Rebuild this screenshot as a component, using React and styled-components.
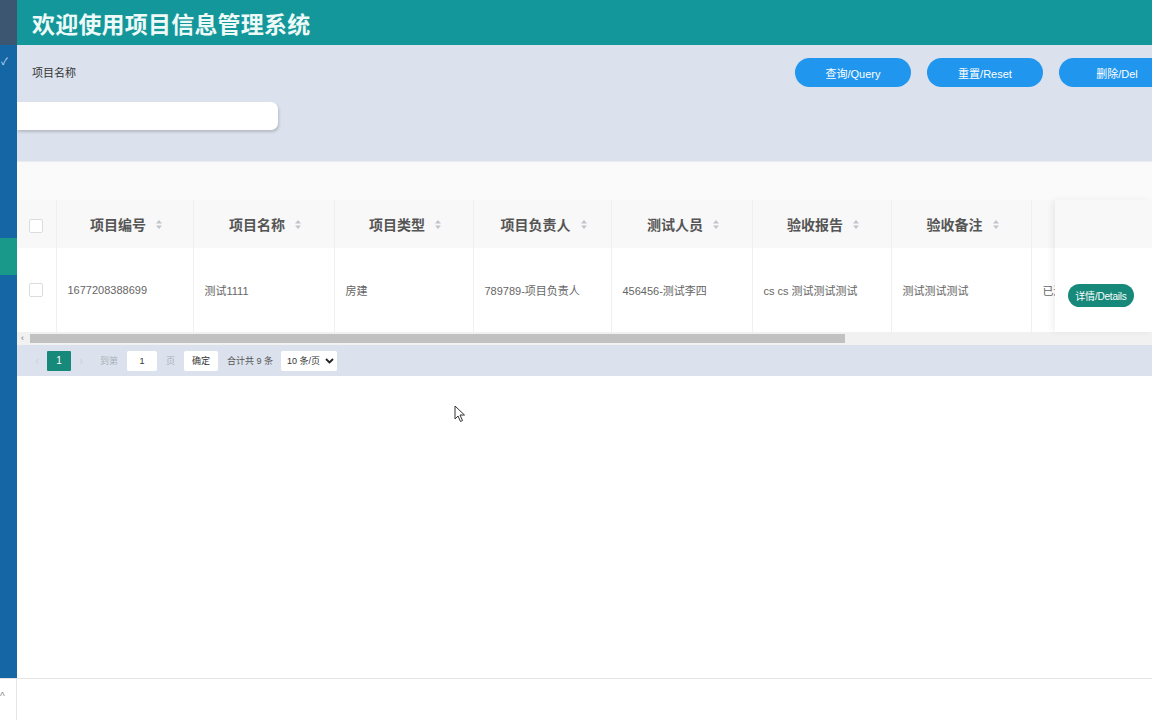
import React from "react"
import styled, { createGlobalStyle } from "styled-components"

const GlobalStyle = createGlobalStyle`
  html, body { margin: 0; padding: 0; }
  body {
    font-family: "Liberation Sans", "Noto Sans CJK SC", sans-serif;
    background: #fff;
  }
  * { box-sizing: border-box; }
`

const columns = [
  { title: "项目编号", width: 137, value: "1677208388699" },
  { title: "项目名称", width: 141, value: "测试1111" },
  { title: "项目类型", width: 139, value: "房建" },
  { title: "项目负责人", width: 138, value: "789789-项目负责人" },
  { title: "测试人员", width: 141, value: "456456-测试李四" },
  { title: "验收报告", width: 139, value: "cs cs 测试测试测试" },
  { title: "验收备注", width: 140, value: "测试测试测试" },
  { title: "验收状态", width: 140, value: "已通过" },
]

function SortIcon() {
  return (
    <svg width="8" height="11" viewBox="0 0 8 11">
      <path d="M4 1 L7 4.5 H1 Z" fill="#c0c4cc" />
      <path d="M4 10 L7 6.5 H1 Z" fill="#c0c4cc" />
    </svg>
  )
}

function Cursor() {
  return (
    <svg width="12" height="18" viewBox="0 0 12 18">
      <path
        d="M1 1 L1 14 L4 11 L6.5 16.5 L8.5 15.5 L6 10 L10.5 10 Z"
        fill="#fff"
        stroke="#333"
        strokeWidth="1"
        strokeLinejoin="round"
      />
    </svg>
  )
}

function App() {
  return (
    <>
      <GlobalStyle />
      <Page>
        <Sidebar>
          <SideTop />
          <SideMenu>
            <SideCheck>✓</SideCheck>
            <SideActive />
          </SideMenu>
          <SideBottom>
            <Caret>^</Caret>
          </SideBottom>
        </Sidebar>
        <Main>
          <Header>
            <Title>欢迎使用项目信息管理系统</Title>
          </Header>
          <SearchPanel>
            <SearchField>
              <Label>项目名称</Label>
              <Input />
            </SearchField>
            <Buttons>
              <PillButton>查询/Query</PillButton>
              <PillButton>重置/Reset</PillButton>
              <PillButton>删除/Del</PillButton>
            </Buttons>
          </SearchPanel>
          <Gap />
          <TableArea>
            <ScrollPart>
              <Table>
                <colgroup>
                  <col style={{ width: 39 }} />
                  {columns.map((c) => (
                    <col key={c.title} style={{ width: c.width }} />
                  ))}
                </colgroup>
                <thead>
                  <tr>
                    <HeadCell>
                      <CheckBox />
                    </HeadCell>
                    {columns.map((c) => (
                      <HeadCell key={c.title}>
                        <HeadInner>
                          {c.title}
                          <SortIcon />
                        </HeadInner>
                      </HeadCell>
                    ))}
                  </tr>
                </thead>
                <tbody>
                  <tr>
                    <BodyCell>
                      <CheckBox />
                    </BodyCell>
                    {columns.map((c) => (
                      <BodyCell key={c.title}>{c.value}</BodyCell>
                    ))}
                  </tr>
                </tbody>
              </Table>
            </ScrollPart>
            <FixedPart>
              <FixedHead />
              <FixedBody>
                <DetailButton>详情/Details</DetailButton>
              </FixedBody>
            </FixedPart>
          </TableArea>
          <ScrollBar>
            <ScrollArrow>‹</ScrollArrow>
            <ScrollThumb />
          </ScrollBar>
          <Pager>
            <PagerArrow>‹</PagerArrow>
            <PageNum>1</PageNum>
            <PagerArrow>›</PagerArrow>
            <PagerText $light>到第</PagerText>
            <PagerInput>1</PagerInput>
            <PagerText $light>页</PagerText>
            <PagerBox>确定</PagerBox>
            <PagerText>合计共 9 条</PagerText>
            <PagerSelect>
              10 条/页
              <svg width="9" height="6" viewBox="0 0 9 6">
                <path d="M1 1 L4.5 4.5 L8 1" stroke="#222" strokeWidth="1.8" fill="none" />
              </svg>
            </PagerSelect>
          </Pager>
          <Blank>
            <CursorSpot>
              <Cursor />
            </CursorSpot>
          </Blank>
          <Footer />
        </Main>
      </Page>
    </>
  )
}

export default App

const Page = styled.div`
  display: flex;
  width: 1152px;
  height: 720px;
  overflow: hidden;
`

const Sidebar = styled.div`
  width: 17px;
  flex-shrink: 0;
  display: flex;
  flex-direction: column;
`

const SideTop = styled.div`
  height: 45px;
  background: #3c5672;
`

const SideMenu = styled.div`
  flex: 1;
  background: #1566a4;
  padding-top: 12px;
  display: flex;
  flex-direction: column;
`

const SideCheck = styled.div`
  color: #cfe3f5;
  font-size: 10px;
  line-height: 10px;
  padding-left: 1px;
`

const SideActive = styled.div`
  height: 37px;
  margin-top: 171px;
  background: #18998a;
`

const SideBottom = styled.div`
  height: 42px;
  background: #fff;
  border-right: 1px solid #e4e4e4;
  border-top: 1px solid #e4e4e4;
  position: relative;
`

const Caret = styled.span`
  position: absolute;
  left: 0;
  top: 12px;
  font-size: 10px;
  color: #888;
`

const Main = styled.div`
  flex: 1;
  display: flex;
  flex-direction: column;
  min-width: 0;
`

const Header = styled.div`
  height: 45px;
  background: #14979a;
  display: flex;
  align-items: center;
  padding-left: 15px;
`

const Title = styled.h1`
  margin: 0;
  color: #eefaf8;
  font-family: "Noto Sans CJK SC", sans-serif;
  font-weight: 700;
  font-size: 23px;
  letter-spacing: 0.2px;
`

const SearchPanel = styled.div`
  height: 117px;
  background: #dce2ed;
  display: flex;
  justify-content: space-between;
  border-bottom: 1px solid #e8ebf0;
`

const SearchField = styled.div`
  display: flex;
  flex-direction: column;
  padding-top: 20px;
`

const Label = styled.div`
  padding-left: 15px;
  font-family: "Noto Sans CJK SC", sans-serif;
  font-size: 11px;
  color: #333;
  height: 14px;
  line-height: 14px;
`

const Input = styled.div`
  margin-top: 23px;
  width: 261px;
  height: 28px;
  background: #fff;
  border-radius: 0 7px 7px 0;
  box-shadow: 1px 2px 3px rgba(0, 0, 0, 0.18);
`

const Buttons = styled.div`
  display: flex;
  gap: 16px;
  padding-top: 13px;
  margin-right: -23px;
`

const PillButton = styled.button`
  width: 116px;
  height: 29px;
  border: none;
  border-radius: 15px;
  background: #2196ee;
  color: #fff;
  font-family: "Liberation Sans", "Noto Sans CJK SC", sans-serif;
  font-size: 11px;
  padding: 0;
  white-space: nowrap;
`

const Gap = styled.div`
  height: 38px;
  background: #fafafa;
`

const TableArea = styled.div`
  display: flex;
  background: #fafafa;
`

const ScrollPart = styled.div`
  width: 1038px;
  overflow: hidden;
`

const Table = styled.table`
  border-collapse: collapse;
  table-layout: fixed;
  width: 1154px;
`

const HeadCell = styled.th`
  height: 48px;
  background: #f8f8f8;
  border-right: 1px solid #efefef;
  font-family: "Noto Sans CJK SC", sans-serif;
  font-size: 14px;
  font-weight: 700;
  color: #555;
  text-align: center;
  padding: 0 0 0 4px;
  &:first-child {
    padding: 0;
  }
`

const HeadInner = styled.span`
  display: inline-flex;
  align-items: center;
  gap: 9px;
  white-space: nowrap;
`

const BodyCell = styled.td`
  height: 84px;
  background: #fff;
  border-right: 1px solid #f0f0f0;
  font-family: "Liberation Sans", "Noto Sans CJK SC", sans-serif;
  font-size: 11px;
  color: #666;
  padding: 0 11px;
  white-space: nowrap;
  overflow: hidden;
  &:first-child {
    padding: 0;
    text-align: center;
  }
`

const CheckBox = styled.span`
  display: inline-block;
  width: 14px;
  height: 14px;
  border: 1px solid #dcdcdc;
  border-radius: 2px;
  background: #fff;
  vertical-align: middle;
`

const FixedPart = styled.div`
  flex: 1;
  display: flex;
  flex-direction: column;
  background: #fff;
  box-shadow: -3px 0 6px rgba(0, 0, 0, 0.06);
  border-radius: 4px 0 0 0;
  position: relative;
  z-index: 1;
`

const FixedHead = styled.div`
  height: 48px;
  background: #f8f8f8;
`

const FixedBody = styled.div`
  height: 84px;
  display: flex;
  align-items: center;
  padding-left: 13px;
  padding-top: 10px;
`

const DetailButton = styled.button`
  width: 66px;
  height: 23px;
  border: none;
  border-radius: 12px;
  background: #17897a;
  color: #fff;
  font-family: "Liberation Sans", "Noto Sans CJK SC", sans-serif;
  font-size: 10px;
  padding: 0;
  letter-spacing: -0.2px;
  white-space: nowrap;
`

const ScrollBar = styled.div`
  height: 13px;
  background: #f1f1f1;
  display: flex;
  align-items: center;
  padding-left: 4px;
  gap: 6px;
`

const ScrollArrow = styled.span`
  font-size: 9px;
  color: #777;
  line-height: 9px;
`

const ScrollThumb = styled.div`
  width: 815px;
  height: 9px;
  background: #c1c1c1;
`

const Pager = styled.div`
  height: 31px;
  background: #dce2ed;
  display: flex;
  align-items: center;
  padding-left: 10px;
  font-family: "Liberation Sans", "Noto Sans CJK SC", sans-serif;
  font-size: 10px;
  white-space: nowrap;
`

const PagerArrow = styled.span`
  color: #cdd2da;
  font-size: 12px;
  width: 20px;
  text-align: center;
  & + & {
    margin-left: 0;
  }
`

const PageNum = styled.span`
  width: 24px;
  height: 20px;
  background: #17897a;
  color: #fff;
  font-size: 10px;
  display: flex;
  align-items: center;
  justify-content: center;
  border-radius: 1px;
`

const PagerText = styled.span`
  color: ${(p) => (p.$light ? "#aab0ba" : "#555")};
  margin: 0 9px;
  font-size: 9px;
`

const PagerBox = styled.span`
  height: 20px;
  padding: 0 8px;
  background: #fff;
  color: #333;
  display: flex;
  align-items: center;
  border-radius: 2px;
  font-size: 9px;
`

const PagerInput = styled(PagerBox)`
  width: 30px;
  justify-content: center;
`

const PagerSelect = styled(PagerBox)`
  width: 56px;
  gap: 4px;
  padding: 0 3px 0 6px;
  justify-content: space-between;
  margin-left: -1px;
`

const Blank = styled.div`
  flex: 1;
  background: #fff;
  position: relative;
`

const CursorSpot = styled.div`
  position: absolute;
  left: 437px;
  top: 29px;
`

const Footer = styled.div`
  height: 42px;
  border-top: 1px solid #e4e4e4;
  background: #fff;
`
